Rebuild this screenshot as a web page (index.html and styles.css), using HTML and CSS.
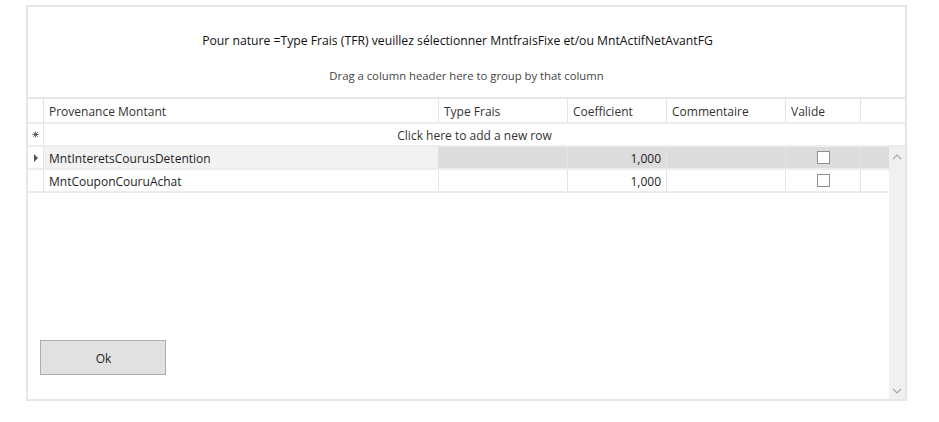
FILE: index.html
```html
<!DOCTYPE html>
<html lang="fr">
<head>
  <meta charset="UTF-8" />
  <title>Provenance Montant</title>
  <link rel="stylesheet" href="styles.css">
</head>
<body>
  <div class="panel">
    <div class="title">Pour nature =Type Frais (TFR) veuillez sélectionner MntfraisFixe et/ou MntActifNetAvantFG</div>
    <div class="group-hint">Drag a column header here to group by that column</div>

    <div class="grid">
      <div class="row head">
        <div class="cell ind"></div>
        <div class="cell">Provenance Montant</div>
        <div class="cell">Type Frais</div>
        <div class="cell">Coefficient</div>
        <div class="cell">Commentaire</div>
        <div class="cell">Valide</div>
        <div class="cell last"></div>
      </div>
      <div class="row new-row">
        <div class="cell ind">
          <svg width="7" height="7" viewBox="0 0 8 8"><path d="M4 0.5V7.5M0.5 4H7.5M1.5 1.5L6.5 6.5M6.5 1.5L1.5 6.5" stroke="#666" stroke-width="1.1"/></svg>
        </div>
        <div class="cell span">Click here to add a new row</div>
      </div>

      <div class="body">
        <div class="rows">
          <div class="row data current">
            <div class="cell ind"><span class="arrow"></span></div>
            <div class="cell first">MntInteretsCourusDetention</div>
            <div class="cell"></div>
            <div class="cell num">1,000</div>
            <div class="cell"></div>
            <div class="cell check"><span class="box"></span></div>
            <div class="cell last"></div>
          </div>
          <div class="row data">
            <div class="cell ind"></div>
            <div class="cell first">MntCouponCouruAchat</div>
            <div class="cell"></div>
            <div class="cell num">1,000</div>
            <div class="cell"></div>
            <div class="cell check"><span class="box"></span></div>
            <div class="cell last"></div>
          </div>

          <div class="actions">
            <button class="ok">Ok</button>
          </div>
        </div>

        <div class="scrollbar">
          <svg width="10" height="6" viewBox="0 0 10 6"><polyline points="1,5 5,1 9,5" fill="none" stroke="#a6a6a6" stroke-width="1.2"/></svg>
          <svg width="10" height="6" viewBox="0 0 10 6"><polyline points="1,1 5,5 9,1" fill="none" stroke="#a6a6a6" stroke-width="1.2"/></svg>
        </div>
      </div>
    </div>
  </div>
</body>
</html>
```

FILE: styles.css
```css
body {
  margin: 0;
  background: #fff;
  font-family: 'Open Sans', 'Noto Sans', sans-serif;
  color: #1e1e1e;
}

.panel {
  margin: 5px 0 0 26px;
  width: 881px;
  height: 396px;
  box-sizing: border-box;
  border: 2px solid #e6e6e6;
  display: flex;
  flex-direction: column;
}

.title {
  font-size: 12.2px;
  color: #111;
  text-align: center;
  margin-top: 25px;
  padding-right: 18px;
  height: 17px;
  line-height: 17px;
}

.group-hint {
  font-size: 11.3px;
  color: #444;
  text-align: center;
  margin-top: 19px;
  height: 15px;
  line-height: 15px;
}

.grid {
  margin-top: 14px;
  flex: 1;
  display: flex;
  flex-direction: column;
  border-top: 2px solid #e6e6e6;
  min-height: 0;
}

.row {
  display: grid;
  grid-template-columns: 16px 395px 129px 99px 119px 75px 1fr;
  font-size: 12px;
  border-bottom: 2px solid #ececec;
}

.cell {
  border-right: 1px solid #e3e3e3;
  padding: 0 5px;
  white-space: nowrap;
  overflow: hidden;
}

.cell.last {
  border-right: none;
}

.head {
  height: 23px;
  line-height: 26px;
  color: #333;
}

.new-row {
  grid-template-columns: 16px 1fr;
  height: 21px;
  line-height: 23px;
  color: #333;
}

.new-row .span {
  text-align: center;
  border-right: none;
}

.ind {
  padding: 0;
  display: flex;
  align-items: center;
  justify-content: center;
}

.body {
  flex: 1;
  display: flex;
  min-height: 0;
}

.rows {
  flex: 1;
  display: flex;
  flex-direction: column;
}

.data {
  height: 21px;
  line-height: 23px;
}

.data:last-of-type {
  border-bottom-color: #e3e3e3;
}

.current .cell {
  background: #dcdcdc;
}

.current .cell.ind {
  background: #fff;
}

.current .cell.first {
  background: #f2f2f2;
}

.num {
  text-align: right;
}

.check {
  display: flex;
  align-items: center;
  justify-content: center;
}

.box {
  width: 11px;
  height: 11px;
  border: 1px solid #8f8f8f;
  background: #fff;
}

.arrow {
  display: inline-block;
  width: 0;
  height: 0;
  border-top: 4px solid transparent;
  border-bottom: 4px solid transparent;
  border-left: 4px solid #555;
}

.actions {
  margin-top: auto;
  padding: 0 0 24px 12px;
}

.ok {
  width: 126px;
  height: 35px;
  background: #e1e1e1;
  border: 1px solid #adadad;
  font-family: 'Open Sans', 'Noto Sans', sans-serif;
  font-size: 12px;
  color: #1e1e1e;
  padding: 0 0 0 1px;
  line-height: 36px;
}

.scrollbar {
  width: 16px;
  background: #f0f0f0;
  display: flex;
  flex-direction: column;
  justify-content: space-between;
  align-items: center;
  padding: 7px 0 5px;
}
```
